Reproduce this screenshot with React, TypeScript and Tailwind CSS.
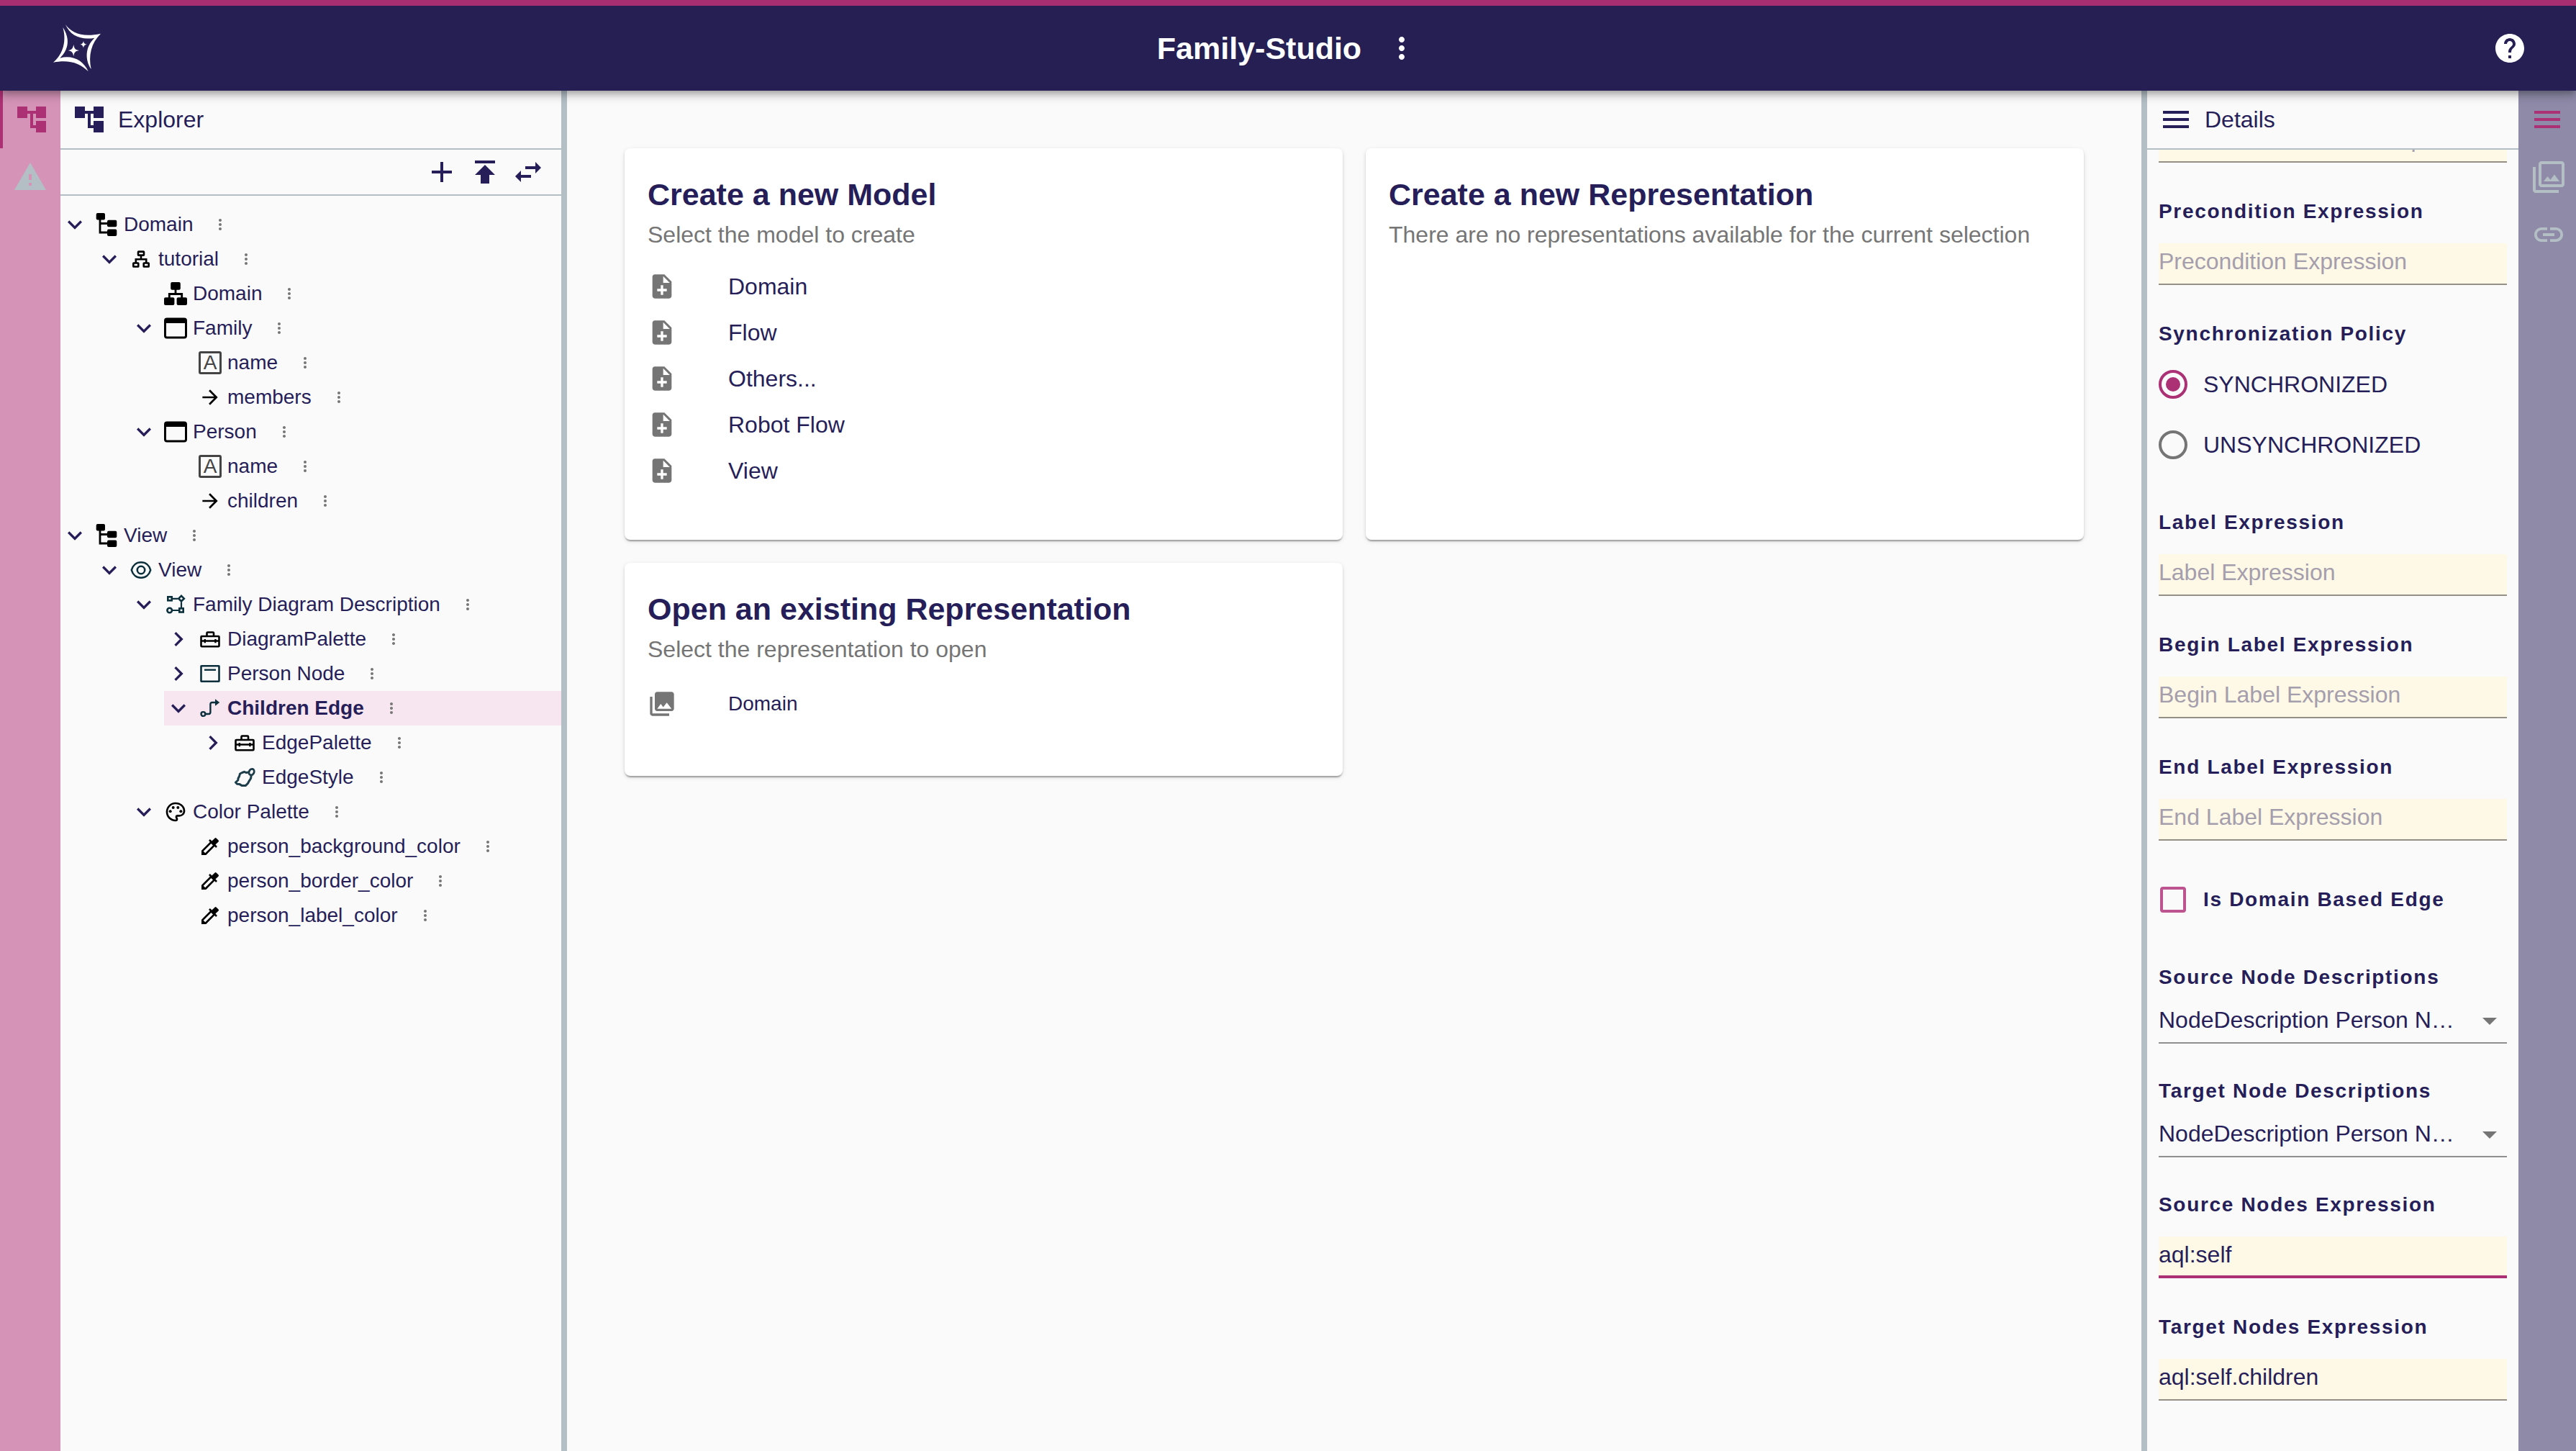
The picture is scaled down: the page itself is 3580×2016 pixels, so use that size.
import React, { useId } from 'react';
import {
  MdAccountTree,
  MdAdd,
  MdArrowDropDown,
  MdArrowForward,
  MdChevronRight,
  MdColorize,
  MdExpandMore,
  MdHelp,
  MdLink,
  MdMenu,
  MdMoreVert,
  MdNoteAdd,
  MdOutlineFilter,
  MdOutlinePalette,
  MdPhotoLibrary,
  MdPublish,
  MdSwapHoriz,
  MdWarning,
} from 'react-icons/md';

/* ---------- Drawings ---------- */

function Logo() {
  return (
    <svg viewBox="42 42 198 198" className="size-[66px] fill-white" aria-hidden="true">
      <path d="M93 42C118 78 165 97 240 80C200 120 188 170 200 228C174 190 174 135 214 98C160 108 112 90 93 42Z" />
      <path d="M82 54C112 100 108 145 70 182C122 168 168 192 188 238C155 202 105 187 42 200C84 165 98 110 82 54Z" />
      <path d="M127 125C129 142 134 148 150 150C134 153 129 158 127 175C124 158 119 153 104 150C119 148 124 142 127 125Z" />
      <path d="M168 111C169 120 173 124 182 125C173 127 169 130 168 140C166 130 163 127 154 125C163 124 166 120 168 111Z" />
    </svg>
  );
}

function Svg({ children, className = '' }: { children: React.ReactNode; className?: string }) {
  return (
    <svg viewBox="0 0 32 32" className={'size-8 shrink-0 ' + className} fill="none" stroke="currentColor" aria-hidden="true">
      {children}
    </svg>
  );
}

function DocumentIcon() {
  return (
    <Svg className="text-black">
      <g fill="currentColor" stroke="none">
        <rect x="1.7" y="0" width="12.3" height="9.6" rx="2" />
        <rect x="17" y="9.8" width="13.3" height="9.4" rx="2" />
        <rect x="17" y="22.6" width="13.3" height="9.4" rx="2" />
      </g>
      <path d="M7 9V27H18M7 14.5H18" strokeWidth="2.8" />
    </Svg>
  );
}

function PackageIcon() {
  return (
    <Svg className="text-black">
      <g strokeWidth="2.6">
        <rect x="12" y="5.6" width="8" height="5" rx="0.6" />
        <rect x="5.3" y="21.5" width="7" height="5" rx="0.6" />
        <rect x="19.7" y="21.5" width="7" height="5" rx="0.6" />
        <path d="M16 11V16M8.8 21V16.2H23.2V21" />
      </g>
    </Svg>
  );
}

function DomainIcon() {
  return (
    <Svg className="text-black">
      <g fill="currentColor" stroke="none">
        <rect x="9.2" y="0" width="13.6" height="10.7" rx="2" />
        <rect x="0" y="21.3" width="14.4" height="10.7" rx="2" />
        <rect x="17.6" y="21.3" width="14.4" height="10.7" rx="2" />
      </g>
      <path d="M16 10V16.5M7.3 22V16.5H24.7V22" strokeWidth="2.8" />
    </Svg>
  );
}

function EntityIcon() {
  return (
    <Svg className="text-black">
      <rect x="1.5" y="3" width="29" height="26" rx="2.5" strokeWidth="3" />
      <path d="M1.5 6H30.5" strokeWidth="6" />
    </Svg>
  );
}

function AttributeIcon() {
  return (
    <span
      aria-hidden="true"
      className="flex size-8 shrink-0 items-center justify-center rounded-[3px] border-[3px] border-[#444] text-[28px] leading-none text-[#444]"
    >
      A
    </span>
  );
}

function RelationIcon() {
  return <MdArrowForward className="size-8 shrink-0 text-black" />;
}

function ViewIcon() {
  return (
    <Svg className="text-[#0c2f3d]">
      <path d="M2.8 16C4.5 9.5 9.5 5.3 16 5.3S27.5 9.5 29.2 16C27.5 22.5 22.5 26.7 16 26.7S4.5 22.5 2.8 16Z" strokeWidth="2.6" />
      <circle cx="16" cy="16" r="5.2" strokeWidth="2.6" />
    </Svg>
  );
}

function DiagramIcon() {
  return (
    <Svg className="text-[#0c2f3d]">
      <g strokeWidth="2.6">
        <rect x="5.3" y="5.3" width="5.4" height="5" />
        <rect x="21.3" y="21.3" width="5.4" height="5.2" />
        <circle cx="7.7" cy="24" r="3.3" />
        <path d="M24 3.9L27.8 7.7L24 11.5L20.2 7.7Z" />
      </g>
      <path d="M12 7.8H19M24 12.5V20M12 24H20" strokeWidth="2.2" />
    </Svg>
  );
}

function ToolboxIcon() {
  return (
    <Svg className="text-black">
      <rect x="3.5" y="12" width="25" height="14.2" rx="1" strokeWidth="2.6" />
      <path d="M11.5 11V7.6Q11.5 6.5 12.6 6.5H19.9Q21 6.5 21 7.6V11" strokeWidth="2.6" />
      <path d="M4 18.5H28M8.8 16V21.3M23.4 16V21.3" strokeWidth="2.4" />
    </Svg>
  );
}

function NodeIcon() {
  return (
    <Svg className="text-[#0c2f3d]">
      <rect x="3.5" y="5.2" width="25" height="21.6" rx="0.5" strokeWidth="2.6" />
      <path d="M8 10.7H24" strokeWidth="2.4" />
    </Svg>
  );
}

function EdgeIcon() {
  return (
    <Svg className="text-[#0c2f3d]">
      <g strokeWidth="2.4">
        <circle cx="6.4" cy="24" r="2.9" />
        <path d="M9.5 24H14Q16.4 24 16.4 21.6V10.4Q16.4 8 18.8 8H24" />
      </g>
      <path d="M23 3.2L29.2 8L23 12.8Z" fill="currentColor" stroke="none" />
    </Svg>
  );
}

function StyleIcon() {
  return (
    <Svg className="text-[#1c3d49]">
      <ellipse cx="25.6" cy="8.6" rx="3.4" ry="4.4" transform="rotate(25 25.6 8.6)" strokeWidth="2.8" />
      <path
        d="M21.5 9L18 9.5L15.5 8.3L12.5 9.5L9.5 11L8.6 14.5L7 17.5L6.8 20L3.4 23L5.5 25.2L9 25.6L12 27.4L17.5 27.4L20.6 24.2L22.4 20.8L24.6 17.5L25.2 13.2"
        strokeWidth="3"
        strokeLinejoin="round"
      />
    </Svg>
  );
}

function PaletteIcon() {
  return <MdOutlinePalette className="size-8 shrink-0 text-black" />;
}

function ColorIcon() {
  return <MdColorize className="size-8 shrink-0 text-black" />;
}

/* ---------- Explorer ---------- */

type Item = {
  label: string;
  level: number;
  icon: () => React.ReactElement;
  state?: 'open' | 'closed';
  selected?: boolean;
};

const items: Item[] = [
  { label: 'Domain', level: 0, icon: DocumentIcon, state: 'open' },
  { label: 'tutorial', level: 1, icon: PackageIcon, state: 'open' },
  { label: 'Domain', level: 2, icon: DomainIcon },
  { label: 'Family', level: 2, icon: EntityIcon, state: 'open' },
  { label: 'name', level: 3, icon: AttributeIcon },
  { label: 'members', level: 3, icon: RelationIcon },
  { label: 'Person', level: 2, icon: EntityIcon, state: 'open' },
  { label: 'name', level: 3, icon: AttributeIcon },
  { label: 'children', level: 3, icon: RelationIcon },
  { label: 'View', level: 0, icon: DocumentIcon, state: 'open' },
  { label: 'View', level: 1, icon: ViewIcon, state: 'open' },
  { label: 'Family Diagram Description', level: 2, icon: DiagramIcon, state: 'open' },
  { label: 'DiagramPalette', level: 3, icon: ToolboxIcon, state: 'closed' },
  { label: 'Person Node', level: 3, icon: NodeIcon, state: 'closed' },
  { label: 'Children Edge', level: 3, icon: EdgeIcon, state: 'open', selected: true },
  { label: 'EdgePalette', level: 4, icon: ToolboxIcon, state: 'closed' },
  { label: 'EdgeStyle', level: 4, icon: StyleIcon },
  { label: 'Color Palette', level: 2, icon: PaletteIcon, state: 'open' },
  { label: 'person_background_color', level: 3, icon: ColorIcon },
  { label: 'person_border_color', level: 3, icon: ColorIcon },
  { label: 'person_label_color', level: 3, icon: ColorIcon },
];

const indents = ['ml-0', 'ml-12', 'ml-24', 'ml-36', 'ml-48'];

function TreeRow({ item }: { item: Item }) {
  const Icon = item.icon;
  return (
    <li
      role="treeitem"
      aria-level={item.level + 1}
      aria-selected={!!item.selected}
      className={'flex h-12 items-center ' + indents[item.level] + (item.selected ? ' bg-[#f7e5ef]' : '')}
    >
      {item.state ? (
        <button type="button" aria-label={'Toggle ' + item.label} className="size-10 shrink-0">
          {item.state === 'open' ? <MdExpandMore className="size-10" /> : <MdChevronRight className="size-10" />}
        </button>
      ) : (
        <span className="w-10 shrink-0" />
      )}
      <button type="button" className="ml-2 flex items-center gap-2">
        <Icon />
        <span className={'text-[28px] leading-12 whitespace-nowrap ' + (item.selected ? 'font-bold' : '')}>{item.label}</span>
      </button>
      <button type="button" aria-label={'More actions for ' + item.label} className="ml-[26px] text-[#757575]">
        <MdMoreVert className="size-6" />
      </button>
    </li>
  );
}

function PanelHeader({ icon, title }: { icon: React.ReactNode; title: string }) {
  return (
    <div className="flex h-[82px] shrink-0 items-center gap-4 border-b-2 border-[#b3bfc5] px-4">
      {icon}
      <h2 className="text-[32px] leading-12">{title}</h2>
    </div>
  );
}

function Explorer() {
  return (
    <section className="flex w-[696px] shrink-0 flex-col overflow-hidden">
      <PanelHeader icon={<MdAccountTree className="size-12" />} title="Explorer" />
      <div className="flex h-16 shrink-0 items-center justify-end gap-3 border-b-2 border-[#b3bfc5] pr-[22px]">
        <button type="button" aria-label="New model"><MdAdd className="size-12" /></button>
        <button type="button" aria-label="Upload model"><MdPublish className="size-12" /></button>
        <button type="button" aria-label="Synchronize"><MdSwapHoriz className="size-12" /></button>
      </div>
      <ul role="tree" className="pt-4">
        {items.map((item, i) => (
          <TreeRow key={i} item={item} />
        ))}
      </ul>
    </section>
  );
}

/* ---------- Main area ---------- */

function Card({ title, subtitle, children }: { title: string; subtitle: string; children?: React.ReactNode }) {
  return (
    <section className="rounded-lg bg-white px-8 pt-8 pb-16 shadow-[0_4px_2px_-2px_rgba(0,0,0,0.2),0_2px_2px_0_rgba(0,0,0,0.14),0_2px_6px_0_rgba(0,0,0,0.12)]">
      <h2 className="text-[43px] leading-16 font-bold">{title}</h2>
      <p className="text-[32px] leading-12 text-[#757575]">{subtitle}</p>
      {children}
    </section>
  );
}

const models = ['Domain', 'Flow', 'Others...', 'Robot Flow', 'View'];

function Workbench() {
  return (
    <main className="grid min-w-0 flex-1 grid-cols-2 content-start gap-8 p-20">
      <Card title="Create a new Model" subtitle="Select the model to create">
        <ul className="pt-4">
          {models.map((m) => (
            <li key={m}>
              <button type="button" className="flex h-16 w-full items-center gap-[72px] text-[32px]">
                <MdNoteAdd className="size-10 text-[#757575]" />
                {m}
              </button>
            </li>
          ))}
        </ul>
      </Card>
      <Card title="Create a new Representation" subtitle="There are no representations available for the current selection" />
      <Card title="Open an existing Representation" subtitle="Select the representation to open">
        <ul className="pt-4">
          <li>
            <button type="button" className="flex h-[72px] w-full items-center gap-[72px] text-[28px]">
              <MdPhotoLibrary className="size-10 text-[#757575]" />
              Domain
            </button>
          </li>
        </ul>
      </Card>
    </main>
  );
}

/* ---------- Details ---------- */

const labelClass = 'block text-[28px] leading-11 font-bold tracking-[0.06em]';

function Expression({ label, value, active }: { label: string; value?: string; active?: boolean }) {
  const id = useId();
  return (
    <div className="shrink-0 pb-0.5">
      <label htmlFor={id} className={labelClass}>{label}</label>
      <input
        id={id}
        type="text"
        placeholder={label}
        defaultValue={value}
        className={
          'mt-[22px] block w-full bg-[#fef8e6] pt-1.5 text-[32px] leading-[38px] outline-none placeholder:text-[#a59ead] ' +
          (active ? 'border-b-4 border-[#ab3074] pb-2.5' : 'border-b-2 border-[#949085] pb-3')
        }
      />
    </div>
  );
}

function Reference({ label }: { label: string }) {
  const id = useId();
  return (
    <div className="shrink-0">
      <label htmlFor={id} className={labelClass}>{label}</label>
      <div className="relative mt-3">
        <select
          id={id}
          className="block w-full appearance-none overflow-hidden border-b-2 border-[#8f8f8f] pt-1.5 pr-14 pb-3 text-[32px] leading-[38px] text-ellipsis whitespace-nowrap outline-none"
        >
          <option>NodeDescription Person Node</option>
        </select>
        <MdArrowDropDown className="pointer-events-none absolute top-0.5 right-0 size-12 text-[#757575]" />
      </div>
    </div>
  );
}

function Policy({ value, checked }: { value: string; checked?: boolean }) {
  return (
    <label className="flex h-[84px] items-center gap-[22px] text-[32px]">
      <input
        type="radio"
        name="policy"
        defaultChecked={checked}
        className="size-10 appearance-none rounded-full border-4 border-[#757575] bg-clip-content p-1.5 checked:border-[#ab3074] checked:bg-[#ab3074]"
      />
      {value}
    </label>
  );
}

function Details() {
  return (
    <section className="flex w-[516px] shrink-0 flex-col">
      <PanelHeader icon={<MdMenu className="size-12" />} title="Details" />
      <form className="flex min-h-0 flex-1 flex-col justify-end gap-11 overflow-hidden px-4 pb-17">
        <div className="shrink-0 pb-0.5">
          <input
            type="text"
            aria-label="Semantic Candidates Expression"
            placeholder="Semantic Candidates Expression"
            className="block w-full border-b-2 border-[#949085] bg-[#fef8e6] pt-1.5 pb-3 text-[32px] leading-[38px] outline-none placeholder:text-[#a59ead]"
          />
        </div>
        <Expression label="Precondition Expression" />
        <div role="radiogroup" aria-labelledby="policy-label" className="shrink-0">
          <span id="policy-label" className={labelClass}>Synchronization Policy</span>
          <div className="pt-1.5">
            <Policy value="SYNCHRONIZED" checked />
            <Policy value="UNSYNCHRONIZED" />
          </div>
        </div>
        <Expression label="Label Expression" />
        <Expression label="Begin Label Expression" />
        <Expression label="End Label Expression" />
        <label className="-mt-1.5 flex h-[84px] shrink-0 items-center gap-6 pl-0.5 text-[28px] font-bold tracking-[0.06em]">
          <input
            type="checkbox"
            className="size-9 appearance-none rounded-[4px] border-4 border-[#bd5490] checked:bg-[#bd5490]"
          />
          Is Domain Based Edge
        </label>
        <Reference label="Source Node Descriptions" />
        <Reference label="Target Node Descriptions" />
        <Expression label="Source Nodes Expression" value="aql:self" active />
        <Expression label="Target Nodes Expression" value="aql:self.children" />
      </form>
    </section>
  );
}

/* ---------- Shell ---------- */

export default function App() {
  return (
    <div className="flex h-screen flex-col overflow-hidden bg-[#fafafa] font-['Liberation_Sans',Arial,sans-serif] text-[#261e58]">
      <header className="relative z-10 grid h-[126px] shrink-0 grid-cols-[1fr_auto_1fr] items-center border-t-8 border-[#a82e72] bg-[#251f54] px-[68px] text-white shadow-[0_4px_8px_-2px_rgba(0,0,0,0.2),0_8px_10px_0_rgba(0,0,0,0.14),0_2px_20px_0_rgba(0,0,0,0.12)]">
        <a href="#" aria-label="Home" className="justify-self-start pl-1.5"><Logo /></a>
        <div className="flex items-center gap-8">
          <h1 className="text-[43px] leading-16 font-bold">Family-Studio</h1>
          <button type="button" aria-label="More"><MdMoreVert className="size-12" /></button>
        </div>
        <button type="button" aria-label="Help" className="justify-self-end"><MdHelp className="size-12" /></button>
      </header>
      <div className="flex min-h-0 flex-1">
        <nav className="flex w-[84px] shrink-0 flex-col bg-[#d493b7]">
          <button type="button" aria-label="Explorer" className="flex h-20 items-center justify-center border-l-4 border-[#ab3074] text-[#ab3074]">
            <MdAccountTree className="size-12" />
          </button>
          <button type="button" aria-label="Validation" className="flex h-20 items-center justify-center text-[#b3bfc5]">
            <MdWarning className="size-12" />
          </button>
        </nav>
        <Explorer />
        <div className="w-2 shrink-0 bg-[#b3bfc5]" />
        <Workbench />
        <div className="w-2 shrink-0 bg-[#b3bfc5]" />
        <Details />
        <nav className="flex w-20 shrink-0 flex-col bg-[#8e8aa8] text-[#b3bfc5]">
          <button type="button" aria-label="Details" className="flex h-20 items-center justify-center text-[#ab3074]">
            <MdMenu className="size-12" />
          </button>
          <button type="button" aria-label="Representations" className="flex h-20 items-center justify-center pl-1">
            <MdOutlineFilter className="size-12" />
          </button>
          <button type="button" aria-label="Related elements" className="flex h-20 items-center justify-center pl-1">
            <MdLink className="size-12" />
          </button>
        </nav>
      </div>
    </div>
  );
}
